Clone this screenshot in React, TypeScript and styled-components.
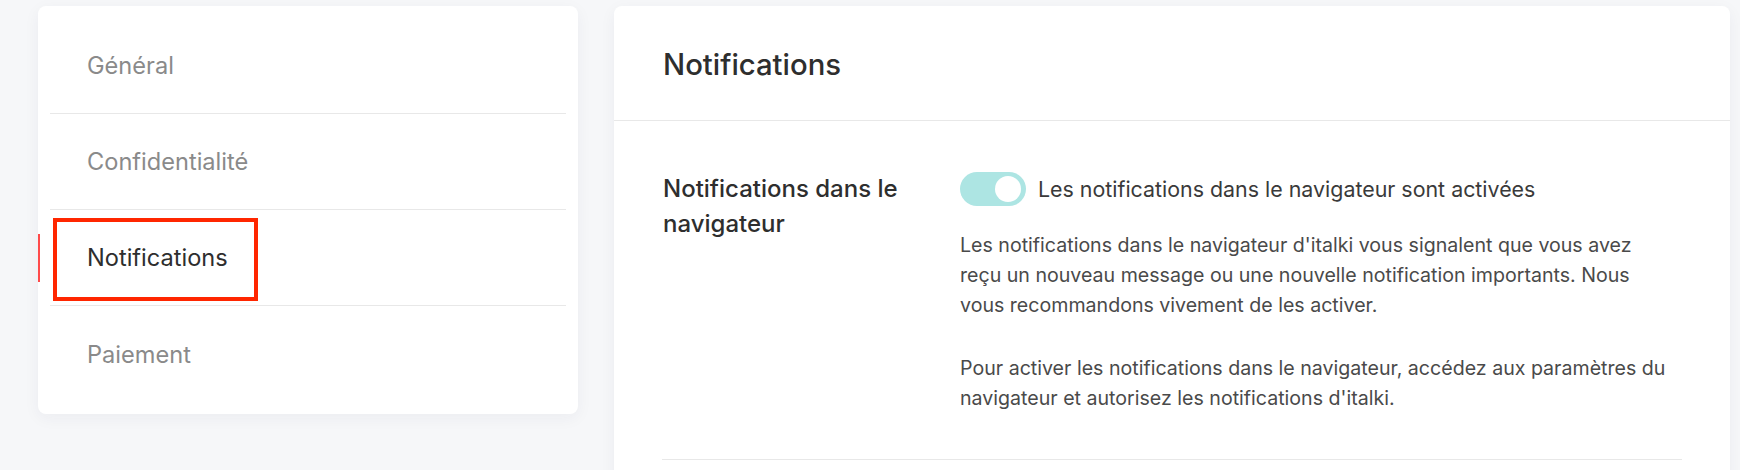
import React from "react";
import styled, { createGlobalStyle } from "styled-components";

const GlobalStyle = createGlobalStyle`
  html, body {
    margin: 0;
    padding: 0;
    background: #f6f7f9;
    font-family: Inter, "Noto Sans", "Liberation Sans", sans-serif;
    -webkit-font-smoothing: antialiased;
  }
  * { box-sizing: border-box; }
`;

const Page = styled.div`
  display: flex;
  align-items: flex-start;
  gap: 36px;
  padding: 6px 0 0 38px;
  height: 470px;
  overflow: hidden;
`;

const Sidebar = styled.nav`
  width: 540px;
  flex: none;
  background: #fff;
  border-radius: 8px;
  box-shadow: 0 4px 16px rgba(30, 40, 70, 0.05);
  padding: 12px;
`;

const NavItem = styled.div<{ $active?: boolean; $last?: boolean }>`
  position: relative;
  height: 96px;
  display: flex;
  align-items: center;
  padding-left: 37px;
  font-size: 23.6px;
  color: ${(p) => (p.$active ? "#2e2e2e" : "#8a8a8a")};
  border-bottom: ${(p) => (p.$last ? "none" : "1.5px solid #e8e8e8")};
`;

const ActiveBar = styled.span`
  position: absolute;
  left: -12px;
  top: 50%;
  width: 2px;
  height: 48px;
  transform: translateY(-50%);
  background: #ff4a4a;
`;

const Highlight = styled.span`
  position: absolute;
  left: 3px;
  top: 8px;
  width: 205px;
  height: 83px;
  border: 4px solid #ff2600;
  pointer-events: none;
`;

const Main = styled.main`
  width: 1116px;
  flex: none;
  height: 500px;
  background: #fff;
  border-radius: 8px;
  box-shadow: 0 4px 16px rgba(30, 40, 70, 0.05);
`;

const Header = styled.header`
  height: 115px;
  display: flex;
  align-items: center;
  padding: 3px 49px 0;
  border-bottom: 1.5px solid #e8e8e8;
`;

const Title = styled.h1`
  margin: 0;
  font-size: 29.3px;
  font-weight: 500;
  color: #2e2e2e;
`;

const Section = styled.section`
  margin: 0 48px;
  padding: 50px 0 46px;
  display: grid;
  grid-template-columns: 298px 1fr;
  border-bottom: 1.5px solid #e8e8e8;
`;

const Label = styled.div`
  font-size: 24px;
  font-weight: 500;
  line-height: 35px;
  color: #2e2e2e;
  padding-left: 1px;
`;

const Content = styled.div`
  display: flex;
  flex-direction: column;
`;

const ToggleRow = styled.div`
  display: flex;
  align-items: center;
  gap: 12px;
  height: 34px;
  margin-top: 1px;
`;

const Switch = styled.span`
  position: relative;
  width: 66px;
  height: 34px;
  border-radius: 17px;
  background: #ade5e3;
  flex: none;
`;

const Knob = styled.span`
  position: absolute;
  right: 5px;
  top: 4px;
  width: 26px;
  height: 26px;
  border-radius: 50%;
  background: #fff;
`;

const ToggleText = styled.span`
  font-size: 21.4px;
  color: #3a3a3a;
`;

const Paragraph = styled.p`
  margin: 24px 0 0;
  font-size: 19.6px;
  line-height: 30px;
  color: #4a4a4a;
  & + & {
    margin-top: 33px;
  }
`;

const items = ["Général", "Confidentialité", "Notifications", "Paiement"];

export default function App() {
  return (
    <>
      <GlobalStyle />
      <Page>
        <Sidebar>
          {items.map((label, i) => {
            const active = label === "Notifications";
            return (
              <NavItem key={label} $active={active} $last={i === items.length - 1}>
                {active && <ActiveBar />}
                {active && <Highlight />}
                {label}
              </NavItem>
            );
          })}
        </Sidebar>
        <Main>
          <Header>
            <Title>Notifications</Title>
          </Header>
          <Section>
            <Label>
              Notifications dans le
              <br />
              navigateur
            </Label>
            <Content>
              <ToggleRow>
                <Switch>
                  <Knob />
                </Switch>
                <ToggleText>Les notifications dans le navigateur sont activées</ToggleText>
              </ToggleRow>
              <Paragraph>
                Les notifications dans le navigateur d'italki vous signalent que vous avez
                <br />
                reçu un nouveau message ou une nouvelle notification importants. Nous
                <br />
                vous recommandons vivement de les activer.
              </Paragraph>
              <Paragraph>
                Pour activer les notifications dans le navigateur, accédez aux paramètres du
                <br />
                navigateur et autorisez les notifications d'italki.
              </Paragraph>
            </Content>
          </Section>
        </Main>
      </Page>
    </>
  );
}
